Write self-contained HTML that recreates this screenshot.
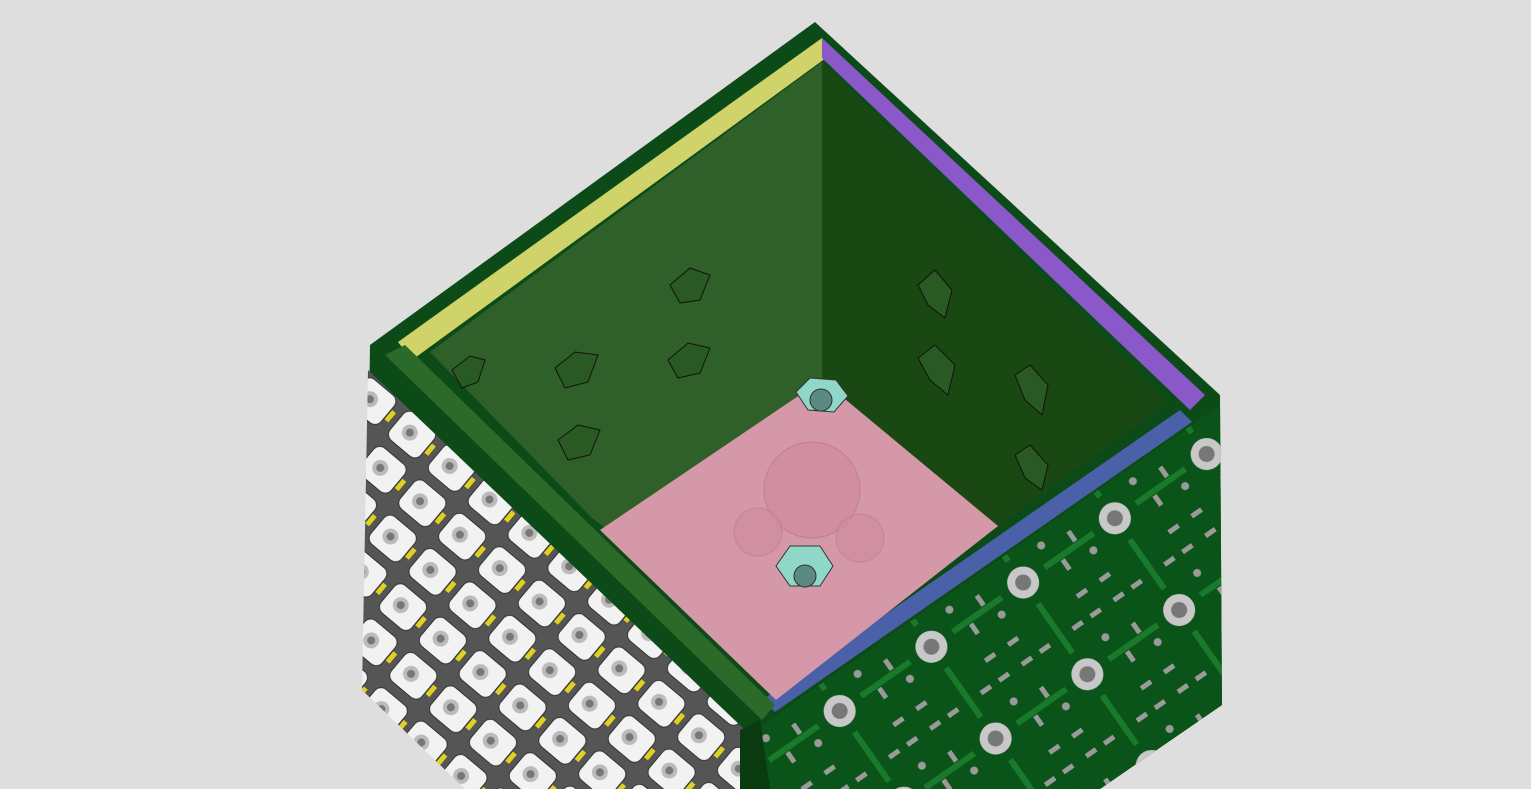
<!DOCTYPE html>
<html><head><meta charset="utf-8"><style>
html,body{margin:0;padding:0;background:#dedede;width:1531px;height:789px;overflow:hidden}
</style></head><body>
<svg width="1531" height="789" viewBox="0 0 1531 789" xmlns="http://www.w3.org/2000/svg">
<defs>
<pattern id="led" width="52" height="46" patternUnits="userSpaceOnUse" patternTransform="rotate(40)">
<rect width="52" height="46" fill="#555"/>
<rect x="3" y="4" width="40" height="36" rx="8" fill="#f2f2f2" stroke="#333" stroke-width="1"/>
<circle cx="20" cy="22" r="8" fill="#bbb"/>
<circle cx="20" cy="22" r="4" fill="#777"/>
<rect x="44" y="16" width="5" height="12" fill="#e0d020"/>
</pattern>
<pattern id="pcb" width="112" height="112" patternUnits="userSpaceOnUse" patternTransform="rotate(-35)">
<rect width="112" height="112" fill="#0b5419"/>
<circle cx="56" cy="56" r="16" fill="#c8c8c8"/>
<circle cx="56" cy="56" r="8" fill="#777"/>
<g fill="#9a9a9a">
<rect x="8" y="8" width="12" height="5"/><rect x="30" y="8" width="12" height="5"/>
<rect x="70" y="8" width="12" height="5"/><rect x="92" y="8" width="12" height="5"/>
<rect x="8" y="96" width="12" height="5"/><rect x="92" y="96" width="12" height="5"/>
<rect x="8" y="40" width="5" height="12"/><rect x="99" y="60" width="5" height="12"/>
<circle cx="20" cy="70" r="4"/><circle cx="92" cy="36" r="4"/>
</g>
<path d="M0 56 L30 56 M82 56 L112 56 M56 0 L56 30 M56 82 L56 112" stroke="#1a7a2c" stroke-width="6"/>
</pattern>
</defs>
<!-- outer body -->
<polygon points="370,345 815,22 1220,395 1222,705 1100,789 740,789 365,690" fill="#0c4a18"/>
<!-- left face -->
<polygon points="368,370 745,730 745,789 465,789 362,690" fill="url(#led)"/>
<!-- right face -->
<polygon points="748,735 1220,405 1222,705 1100,789 748,789" fill="url(#pcb)"/>
<polygon points="740,730 760,720 770,789 740,789" fill="#0a3a10"/>
<!-- top rims -->
<polygon points="398,342 822,38 830,55 412,360" fill="#cfd36a"/>
<polygon points="822,38 1205,395 1190,410 822,58" fill="#8a58c8"/>
<polygon points="1180,410 1192,422 775,712 762,700" fill="#4a60a8"/>
<polygon points="385,355 405,345 775,705 762,720" fill="#2b6a28"/>
<!-- inner walls -->
<polygon points="430,352 822,62 822,380 605,528 592,518" fill="#2f6029"/>
<polygon points="822,62 1168,402 998,526 822,380" fill="#1a4812"/>
<!-- floor -->
<polygon points="600,530 822,380 998,526 776,700" fill="#d598a8"/>
<circle cx="812" cy="490" r="48" fill="#d08aa0" stroke="#b77" stroke-width="1" opacity="0.7"/>
<circle cx="758" cy="532" r="24" fill="#d08aa0" stroke="#b77" stroke-width="1" opacity="0.6"/>
<circle cx="860" cy="538" r="24" fill="#d08aa0" stroke="#b77" stroke-width="1" opacity="0.6"/>
<!-- nuts -->
<polygon points="796,392 810,378 836,380 848,396 834,412 808,410" fill="#8fd8c8" stroke="#333"/>
<circle cx="821" cy="400" r="11" fill="#5a8a80" stroke="#333"/>
<polygon points="776,566 790,546 820,546 833,566 820,586 790,586" fill="#8fd8c8" stroke="#333"/>
<circle cx="805" cy="576" r="11" fill="#5a8a80" stroke="#333"/>
<!-- hex features on walls -->
<g fill="#2a5a24" stroke="#111" stroke-width="1">
<polygon points="670,285 690,268 710,275 700,300 680,303"/>
<polygon points="555,368 575,352 598,355 588,382 565,388"/>
<polygon points="668,360 688,343 710,348 700,373 678,378"/>
<polygon points="558,440 578,425 600,430 590,455 568,460"/>
<polygon points="452,370 470,356 485,360 478,382 462,388"/>
<polygon points="918,285 935,270 952,290 945,318 928,305"/>
<polygon points="918,358 935,345 955,365 948,395 930,380"/>
<polygon points="1015,375 1030,365 1048,385 1042,415 1025,400"/>
<polygon points="1015,455 1030,445 1048,465 1042,490 1025,478"/>
</g>
</svg>
</body></html>
